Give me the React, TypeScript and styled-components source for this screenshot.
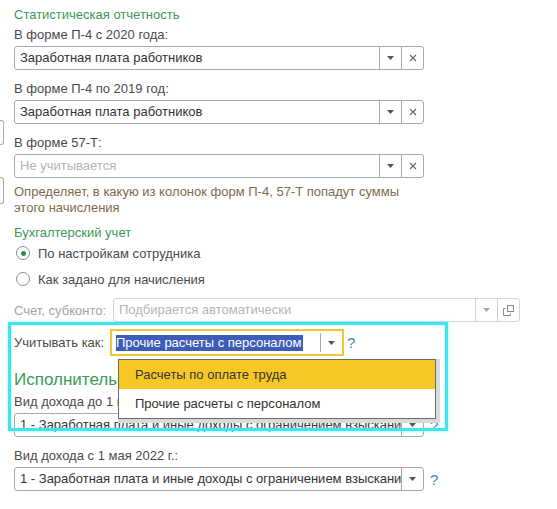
import styled, { createGlobalStyle } from 'styled-components'

const GlobalStyle = createGlobalStyle`
  html, body {
    margin: 0;
    padding: 0;
    background: #fff;
  }
  body {
    font-family: "Liberation Sans", Arial, sans-serif;
    font-size: 13px;
    color: #4a4a4a;
  }
`

const Page = styled.div`
  display: flex;
  width: 557px;
  height: 509px;
  overflow: hidden;
`

const StubColumn = styled.div`
  width: 14px;
  flex-shrink: 0;
  display: flex;
  flex-direction: column;
  padding-top: 120px;
  gap: 32px;
`

const Stub = styled.div<{ h: number }>`
  width: 3px;
  height: ${({ h }) => h}px;
  border: 1px solid #a9a9a9;
  border-left: none;
  border-radius: 0 3px 3px 0;
`

const Form = styled.div`
  display: flex;
  flex-direction: column;
  padding-top: 7px;
  width: 530px;
`

const GroupTitle = styled.div<{ big?: boolean; mt?: number }>`
  color: #3b9a55;
  font-size: ${({ big }) => (big ? '17px' : '13px')};
  line-height: ${({ big }) => (big ? '20px' : '16px')};
  margin-top: ${({ mt }) => mt ?? 0}px;
  white-space: nowrap;
`

const Label = styled.div<{ mt?: number }>`
  line-height: 16px;
  margin-top: ${({ mt }) => mt ?? 0}px;
  margin-bottom: 3px;
  white-space: nowrap;
`

const Note = styled.div`
  color: #7e6a4e;
  line-height: 16px;
  margin-top: 6px;
  margin-bottom: 9px;
`

const Row = styled.div<{ mt?: number }>`
  display: flex;
  align-items: center;
  margin-top: ${({ mt }) => mt ?? 0}px;
`

const Field = styled.div<{ w: number; disabled?: boolean }>`
  display: flex;
  width: ${({ w }) => w}px;
  height: 24px;
  box-sizing: border-box;
  border: 1px solid ${({ disabled }) => (disabled ? '#d4d4d4' : '#a9a9a9')};
  border-radius: 3px;
  background: #fff;
  flex-shrink: 0;
`

const FieldText = styled.div<{ muted?: boolean }>`
  flex: 1;
  padding: 0 5px;
  line-height: 22px;
  white-space: nowrap;
  overflow: hidden;
  color: ${({ muted }) => (muted ? '#b4b4b4' : '#333')};
`

const FieldButton = styled.div<{ light?: boolean }>`
  width: 21px;
  flex-shrink: 0;
  border-left: 1px solid ${({ light }) => (light ? '#d4d4d4' : '#a9a9a9')};
  display: flex;
  align-items: center;
  justify-content: center;
`

const Help = styled.span<{ gap?: number }>`
  color: #3f86b8;
  font-size: 15px;
  margin-left: ${({ gap }) => gap ?? 6}px;
`

const RadioRow = styled.label<{ mt: number }>`
  display: flex;
  align-items: center;
  height: 20px;
  margin-top: ${({ mt }) => mt}px;
  padding-left: 2px;
  gap: 8px;
  color: #4a4a4a;
`

const RadioCircle = styled.span<{ checked?: boolean }>`
  width: 14px;
  height: 14px;
  box-sizing: border-box;
  border-radius: 50%;
  border: 1px solid #8c8c8c;
  display: flex;
  align-items: center;
  justify-content: center;

  &::after {
    content: '';
    width: 5px;
    height: 5px;
    border-radius: 50%;
    background: ${({ checked }) => (checked ? '#2f8a4a' : 'transparent')};
  }
`

const MutedLabel = styled.div`
  width: 99px;
  color: #a4a4a4;
  white-space: nowrap;
`

const Section = styled.div`
  position: relative;
  padding-top: 7px;
  display: flex;
  flex-direction: column;
`

const Highlight = styled.div`
  position: absolute;
  left: -6px;
  top: 0;
  width: 440px;
  height: 109px;
  box-sizing: border-box;
  border: 3px solid #3fe4ec;
  box-shadow: 0 0 3px #8ef2f6, inset 0 0 2px #8ef2f6;
  pointer-events: none;
  z-index: 3;
`

const ComboLabel = styled.div`
  width: 96px;
  white-space: nowrap;
`

const Combo = styled.div`
  position: relative;
  display: flex;
  width: 234px;
  height: 27px;
  box-sizing: border-box;
  border: 2px solid #efc53c;
  background: #fff;
`

const ComboText = styled.div`
  flex: 1;
  padding-left: 4px;
  display: flex;
  align-items: center;
  white-space: nowrap;
  overflow: hidden;
`

const Selected = styled.span`
  background: #3d5cb8;
  color: #fff;
  line-height: 16px;
  padding-right: 1px;
`

const ComboButton = styled.div`
  width: 21px;
  border-left: 1px solid #a9a9a9;
  margin: 2px 0;
  display: flex;
  align-items: center;
  justify-content: center;
`

const Popup = styled.div`
  position: absolute;
  left: 6px;
  top: 28px;
  width: 318px;
  box-sizing: border-box;
  border: 1px solid #6a6a6a;
  background: #fff;
  box-shadow: 2px 2px 0 2px #dadada;
  z-index: 2;
`

const PopupItem = styled.div<{ active?: boolean }>`
  height: 29px;
  line-height: 29px;
  padding-left: 16px;
  color: #333;
  background: ${({ active }) => (active ? '#f7c824' : '#fff')};
`

const Arrow = ({ color = '#555' }: { color?: string }) => (
  <svg width="7" height="4" viewBox="0 0 7 4">
    <path d="M0 0h7L3.5 4z" fill={color} />
  </svg>
)

const Cross = () => (
  <svg width="8" height="8" viewBox="0 0 8 8">
    <path d="M1 1l6 6M7 1L1 7" stroke="#666" strokeWidth="1.1" />
  </svg>
)

const OpenIcon = () => (
  <svg width="11" height="11" viewBox="0 0 11 11">
    <rect x="4.5" y="0.5" width="6" height="6" fill="none" stroke="#8a8a8a" />
    <path d="M2.5 3.5h-2v7h7v-2" fill="none" stroke="#8a8a8a" />
  </svg>
)

function Select({ value, w = 410, muted, clear = true }: { value: string; w?: number; muted?: boolean; clear?: boolean }) {
  return (
    <Field w={w}>
      <FieldText muted={muted}>{value}</FieldText>
      <FieldButton><Arrow /></FieldButton>
      {clear && <FieldButton><Cross /></FieldButton>}
    </Field>
  )
}

export default function App() {
  return (
    <Page>
      <GlobalStyle />
      <StubColumn>
        <Stub h={23} />
        <Stub h={25} />
      </StubColumn>

      <Form>
        <GroupTitle>Статистическая отчетность</GroupTitle>
        <Label mt={4}>В форме П-4 с 2020 года:</Label>
        <Select value="Заработная плата работников" />
        <Label mt={11}>В форме П-4 по 2019 год:</Label>
        <Select value="Заработная плата работников" />
        <Label mt={11}>В форме 57-Т:</Label>
        <Select value="Не учитывается" muted />
        <Note>
          Определяет, в какую из колонок форм П-4, 57-Т попадут суммы<br />
          этого начисления
        </Note>

        <GroupTitle>Бухгалтерский учет</GroupTitle>
        <RadioRow mt={2}>
          <RadioCircle checked />
          По настройкам сотрудника
        </RadioRow>
        <RadioRow mt={6}>
          <RadioCircle />
          Как задано для начисления
        </RadioRow>

        <Row mt={9}>
          <MutedLabel>Счет, субконто:</MutedLabel>
          <Field w={407} disabled>
            <FieldText muted>Подбирается автоматически</FieldText>
            <FieldButton light><Arrow color="#aaa" /></FieldButton>
            <FieldButton light><OpenIcon /></FieldButton>
          </Field>
        </Row>

        <Section>
          <Highlight />
          <Row>
            <ComboLabel>Учитывать как:</ComboLabel>
            <Combo>
              <ComboText><Selected>Прочие расчеты с персоналом</Selected></ComboText>
              <ComboButton><Arrow /></ComboButton>
              <Popup>
                <PopupItem active>Расчеты по оплате труда</PopupItem>
                <PopupItem>Прочие расчеты с персоналом</PopupItem>
              </Popup>
            </Combo>
            <Help gap={3}>?</Help>
          </Row>
          <GroupTitle big mt={14}>Исполнительное производство</GroupTitle>
          <Label mt={4}>Вид дохода до 1 мая 2022 г.:</Label>
          <Row>
            <Select value="1 - Заработная плата и иные доходы с ограничением взыскания" clear={false} />
            <Help>?</Help>
          </Row>
        </Section>

        <Label mt={11}>Вид дохода с 1 мая 2022 г.:</Label>
        <Row>
          <Select value="1 - Заработная плата и иные доходы с ограничением взыскания" clear={false} />
          <Help>?</Help>
        </Row>
      </Form>
    </Page>
  )
}
